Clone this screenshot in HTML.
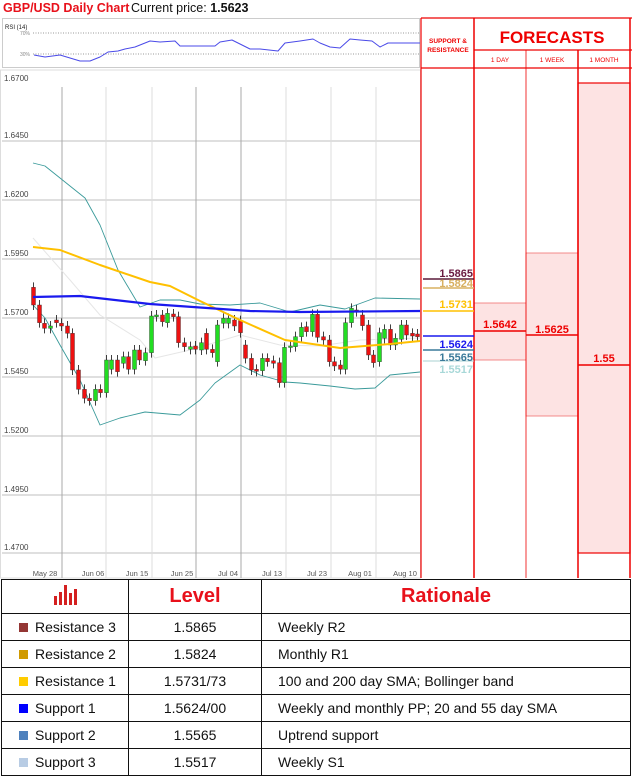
<!DOCTYPE html>
<html><head><meta charset="utf-8"><style>
body{margin:0;width:632px;height:778px;background:#fff;font-family:"Liberation Sans",sans-serif;overflow:hidden;position:relative}
#t1{position:absolute;left:3px;top:1px;font-size:12.5px;font-weight:bold;color:#e8111b}
#t2{position:absolute;left:131px;top:1px;font-size:12.5px;color:#111}
table{position:absolute;left:1px;top:579px;border-collapse:collapse;width:630px;table-layout:fixed}
td{border:1.5px solid #111;font-size:14px;color:#111;height:26px;padding:0}
td.c1{padding-left:33px;position:relative}
td.c2{text-align:center}
td.c3{padding-left:16px}
.sq{position:absolute;left:17px;top:9px;width:9px;height:9px}
th{border:1.5px solid #111;height:31px;color:#e8111b;font-size:20px;font-weight:bold}
</style></head><body>
<div id="t1">GBP/USD Daily Chart</div>
<div id="t2">Current price: <b>1.5623</b></div>
<svg id="s" width="632" height="580" style="position:absolute;left:0;top:0" font-family="Liberation Sans,sans-serif"></svg>
<table>
<colgroup><col style="width:127px"><col style="width:133px"><col></colgroup>
<tr><th><svg width="26" height="22" viewBox="0 0 26 22"><g fill="#d42020"><rect x="2" y="13" width="3" height="9"/><rect x="7" y="9" width="3" height="13"/><rect x="12" y="2" width="3" height="20"/><rect x="17" y="10" width="3" height="12"/><rect x="22" y="6" width="3" height="16"/></g></svg></th><th>Level</th><th>Rationale</th></tr>
<tr><td class="c1"><span class="sq" style="background:#943634"></span>Resistance 3</td><td class="c2">1.5865</td><td class="c3">Weekly R2</td></tr>
<tr><td class="c1"><span class="sq" style="background:#d09a00"></span>Resistance 2</td><td class="c2">1.5824</td><td class="c3">Monthly R1</td></tr>
<tr><td class="c1"><span class="sq" style="background:#ffcc00"></span>Resistance 1</td><td class="c2">1.5731/73</td><td class="c3">100 and 200 day SMA; Bollinger band</td></tr>
<tr><td class="c1"><span class="sq" style="background:#0000ff"></span>Support 1</td><td class="c2">1.5624/00</td><td class="c3">Weekly and monthly PP; 20 and 55 day SMA</td></tr>
<tr><td class="c1"><span class="sq" style="background:#4f81bd"></span>Support 2</td><td class="c2">1.5565</td><td class="c3">Uptrend support</td></tr>
<tr><td class="c1"><span class="sq" style="background:#b8cce4"></span>Support 3</td><td class="c2">1.5517</td><td class="c3">Weekly S1</td></tr>
</table>
<script>
var s=document.getElementById('s'),h='';
function L(x1,y1,x2,y2,c,w){h+='<line x1="'+x1+'" y1="'+y1+'" x2="'+x2+'" y2="'+y2+'" stroke="'+c+'" stroke-width="'+(w||1)+'"/>';}
function R(x,y,w,hh,f,st,sw){h+='<rect x="'+x+'" y="'+y+'" width="'+w+'" height="'+hh+'" fill="'+f+'"'+(st?' stroke="'+st+'" stroke-width="'+(sw||1)+'"':'')+'/>';}
function T(x,y,t,sz,c,a,b){h+='<text x="'+x+'" y="'+y+'" font-size="'+sz+'" fill="'+c+'"'+(a?' text-anchor="'+a+'"':'')+(b?' font-weight="bold"':'')+'>'+t+'</text>';}
function P(pts,c,w){h+='<polyline fill="none" stroke="'+c+'" stroke-width="'+w+'" stroke-linejoin="round" points="'+pts+'"/>';}
R(2.5,18.5,417,49,'#fff','#ccc');
T(5,29,'RSI (14)',6,'#222');T(20,35,'70%',5,'#888');T(20,56,'30%',5,'#888');
h+='<line x1="33" y1="33" x2="419" y2="33" stroke="#999" stroke-dasharray="1,1.5"/><line x1="33" y1="54" x2="419" y2="54" stroke="#999" stroke-dasharray="1,1.5"/>';
P('34,55 45,57 60,55 70,58 80,61 90,61 100,57 108,52 118,51 125,49 135,47 150,41 160,42 175,41 180,46 200,46 215,46 220,42 232,40 250,49 260,49 278,51 285,43 300,41 313,39 320,43 330,47 340,48 350,39 360,40 372,41 380,47 388,43 400,43 420,43','#4a4ae8',1);
R(0.5,70,420,508,'#fff','#ddd');
T(4,81,'1.6700',8,'#444');
var gy=[82,141,200,259,318,377,436,495,553];
var gl=['1.6700','1.6450','1.6200','1.5950','1.5700','1.5450','1.5200','1.4950','1.4700'];
for(var i=1;i<9;i++){L(2,gy[i],420,gy[i],'#ccc',1.2);T(4,gy[i]-3,gl[i],8,'#444');}
var vx=[62,106,152,196,241,286,331,376];
for(i=0;i<vx.length;i++){L(vx[i],87,vx[i],578,(i==0||i==3||i==4)?'#aaa':'#ddd',1);}
var dl=[['May 28',45],['Jun 06',93],['Jun 15',137],['Jun 25',182],['Jul 04',228],['Jul 13',272],['Jul 23',317],['Aug 01',360],['Aug 10',405]];
for(i=0;i<dl.length;i++)T(dl[i][1],576,dl[i][0],7.5,'#555','middle');
P('33,238 70,280 100,315 140,340 155,358 190,350 240,335 280,345 320,346 360,340 420,338','#e6e6e6',1);
P('33,163 45,166 60,178 85,198 100,225 118,270 140,307 160,300 180,300 200,304 230,305 260,303 290,312 320,305 345,309 375,298 420,299','#3a9a9a',0.9);
P('33,305 45,318 60,345 80,380 100,425 120,418 145,412 180,415 200,400 215,383 240,365 260,375 285,382 300,383 330,386 355,389 375,388 390,375 420,372','#3a9a9a',0.9);
var c=[[33,'r',412,465],[39,'r',465,518],[44,'r',520,535],[50,'g',528,535],[56,'r',510,518],[61,'r',520,528],[67,'r',528,550],[72,'r',550,660],[78,'r',660,718],[84,'r',718,745],[89,'r',745,752],[95,'g',718,752],[100,'r',718,728],[106,'g',630,728],[111,'g',630,658],[117,'r',630,665],[123,'g',620,640],[128,'r',620,658],[134,'g',600,658],[139,'r',600,630],[145,'g',608,632],[151,'g',498,608],[156,'g',495,500],[162,'r',495,515],[167,'g',490,518],[173,'r',492,500],[178,'r',500,578],[184,'r',578,590],[190,'g',590,598],[195,'r',588,598],[201,'g',578,600],[206,'r',550,598],[212,'r',598,608],[217,'g',525,635],[223,'g',505,520],[228,'g',505,520],[234,'r',510,528],[240,'r',512,548],[245,'r',585,625],[251,'r',625,660],[256,'r',658,664],[262,'g',625,662],[267,'r',625,635],[273,'r',632,640],[279,'r',638,698],[284,'g',592,698],[290,'g',588,592],[295,'g',560,590],[301,'g',532,560],[306,'r',530,545],[312,'g',493,545],[317,'r',493,562],[323,'r',560,570],[329,'r',570,635],[334,'r',635,648],[340,'r',645,658],[345,'g',518,658],[351,'g',475,518],[356,'r',480,485],[362,'r',495,527],[368,'r',525,615],[373,'r',615,638],[379,'g',548,635],[384,'g',538,565],[390,'r',538,585],[395,'g',565,585],[401,'g',525,568],[406,'r',525,555],[412,'r',550,558],[417,'r',552,560]];
for(i=0;i<c.length;i++){var x=c[i][0],a=150+c[i][2]/3,b=150+c[i][3]/3;L(x+0.5,a-5,x+0.5,b+5,'#111',0.8);R(x-1.5,a,4,Math.max(1.5,b-a),c[i][1]=='r'?'#ee1111':'#22dd22','#333',0.4);}
P('33,247 60,250 100,265 150,282 170,286 200,301 240,320 285,340 340,348 390,344 420,341','#ffc000',2);
P('33,297 80,296 150,304 250,311 300,312 420,311','#1a1aee',2.2);
R(421,18,211,560,'#fff');
R(474,303,52,57,'#fde3e3','#f07070',0.8);
R(526,253,52,163,'#fde3e3','#f07070',0.8);
R(578,83,52,470,'#fde3e3','#e00',1.2);
var red='#e00';
L(421,18,421,578,red,1.2);L(474,18,474,578,red,1.5);L(526,50,526,578,red,0.8);L(578,50,578,578,red,1.5);L(630,18,630,578,red,1.5);
L(421,18,632,18,red,1.2);L(474,50,632,50,red,1.2);L(421,68,632,68,red,1.2);
T(448,43,'SUPPORT &amp;',6.5,red,'middle',1);T(448,52,'RESISTANCE',6.5,red,'middle',1);
T(552,43,'FORECASTS',17,red,'middle',1);
T(500,62,'1 DAY',6.5,red,'middle');T(552,62,'1 WEEK',6.5,red,'middle');T(604,62,'1 MONTH',6.5,red,'middle');
L(474,331,526,331,red,1.5);T(500,328,'1.5642',11,red,'middle',1);
L(526,335,578,335,red,1.5);T(552,333,'1.5625',11,red,'middle',1);
L(578,365,630,365,red,1.5);T(604,362,'1.55',11,red,'middle',1);
L(423,279,474,279,'#5a1a3a',1.5);L(423,288,474,288,'#d8b060',1.5);L(423,311,474,311,'#ffc000',1.5);L(423,336,474,336,'#1a1aee',1.5);L(423,350,474,350,'#3a7a9a',1.5);L(423,361,474,361,'#a8d0d0',1);
T(473,277,'1.5865',11,'#6a1a40','end',1);T(473,287,'1.5824',11,'#d8b060','end',1);T(473,308,'1.5731',11,'#ffc000','end',1);T(473,348,'1.5624',11,'#1a1aee','end',1);T(473,361,'1.5565',11,'#3a7a9a','end',1);T(473,373,'1.5517',11,'#a8d8d8','end',1);
s.innerHTML=h;
</script>
</body></html>
